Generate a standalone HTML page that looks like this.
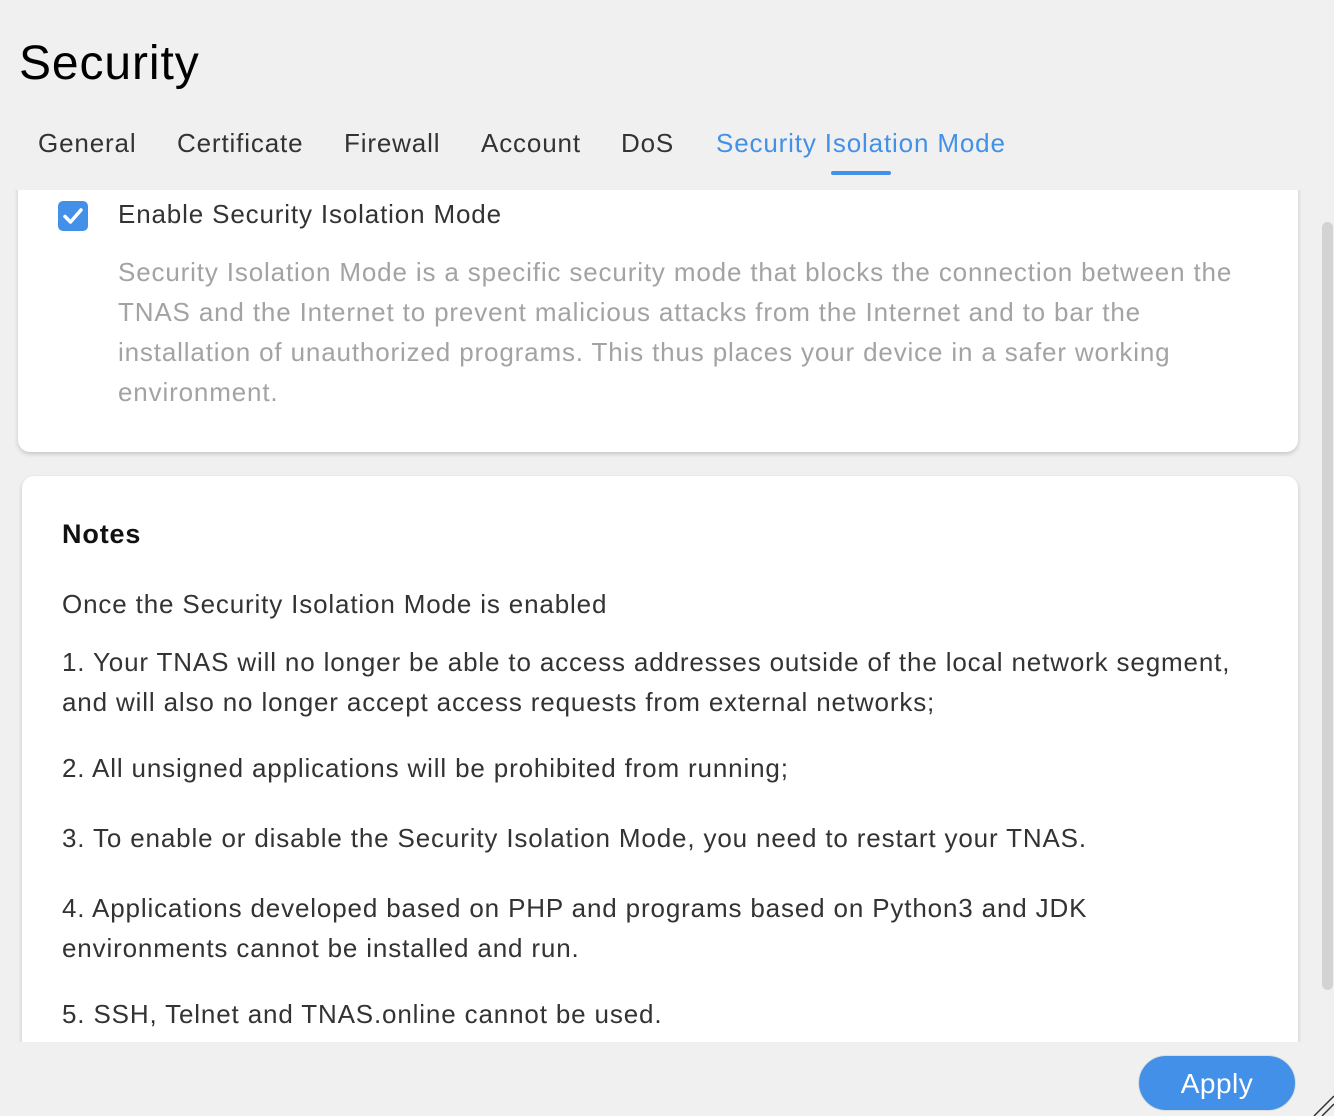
<!DOCTYPE html>
<html><head><meta charset="utf-8"><style>
*{margin:0;padding:0;box-sizing:border-box}
body{width:1334px;height:1116px;background:#f0f0f0;font-family:"Liberation Sans",Arial,sans-serif;position:relative;overflow:hidden;color:#333}
.title{position:absolute;left:19px;top:36px;font-size:48px;color:#000;letter-spacing:.9px}
.tabs{position:absolute;top:128px;left:0;font-size:26px;color:#333;letter-spacing:.85px}
.tabs span{position:absolute;white-space:nowrap}
.ul{position:absolute;left:831px;top:171px;width:60px;height:4px;background:#4290e8;border-radius:2px}
.clip{position:absolute;left:0;top:190px;width:1334px;height:852px;overflow:hidden}
.card{position:absolute;background:#fff;border-radius:12px;box-shadow:0 2px 5px rgba(0,0,0,.18)}
.cb{position:absolute;left:58px;top:11px;width:30px;height:30px;background:#4290e8;border-radius:5px}
.t{position:absolute;font-size:26px;line-height:40px;white-space:nowrap;letter-spacing:.85px}
.sb{position:absolute;left:1322px;top:222px;width:11px;height:768px;background:#d3d3d5;border-radius:6px}
.btn{position:absolute;left:1138px;top:1055px;width:158px;height:56px;border-radius:28px;background:#4290e8;color:#fff;font-size:28px;text-align:center;line-height:56px;border:1px solid #ddd;letter-spacing:.5px}
</style></head><body>
<div class="title">Security</div>
<div class="tabs">
<span style="left:38px">General</span>
<span style="left:177px">Certificate</span>
<span style="left:344px">Firewall</span>
<span style="left:481px">Account</span>
<span style="left:621px">DoS</span>
<span style="left:716px;color:#4290e8">Security Isolation Mode</span>
</div>
<div class="ul"></div>
<div class="clip">
<div class="card" style="left:18px;top:-20px;width:1280px;height:282px;border-radius:0 0 12px 12px"></div>
<div class="cb"><svg width="30" height="30" viewBox="0 0 30 30"><path d="M7 15.5l5.5 5.5L23 9" stroke="#fff" stroke-width="3.5" fill="none" stroke-linecap="round" stroke-linejoin="round"/></svg></div>
<div class="t" style="left:118px;top:4px">Enable Security Isolation Mode</div>
<div class="t" style="left:118px;top:62px;color:#a3a3a3">Security Isolation Mode is a specific security mode that blocks the connection between the<br>TNAS and the Internet to prevent malicious attacks from the Internet and to bar the<br>installation of unauthorized programs. This thus places your device in a safer working<br>environment.</div>
<div class="card" style="left:22px;top:286px;width:1276px;height:640px"></div>
<div class="t" style="left:62px;top:324px;font-weight:bold;color:#111;font-size:27px">Notes</div>
<div class="t" style="left:62px;top:394px">Once the Security Isolation Mode is enabled</div>
<div class="t" style="left:62px;top:452px">1. Your TNAS will no longer be able to access addresses outside of the local network segment,<br>and will also no longer accept access requests from external networks;</div>
<div class="t" style="left:62px;top:558px">2. All unsigned applications will be prohibited from running;</div>
<div class="t" style="left:62px;top:628px">3. To enable or disable the Security Isolation Mode, you need to restart your TNAS.</div>
<div class="t" style="left:62px;top:698px">4. Applications developed based on PHP and programs based on Python3 and JDK<br>environments cannot be installed and run.</div>
<div class="t" style="left:62px;top:804px">5. SSH, Telnet and TNAS.online cannot be used.</div>
</div>
<div class="sb"></div>
<div class="btn">Apply</div>
<svg style="position:absolute;left:1310px;top:1092px" width="24" height="24"><path d="M4 24L24 4M12 24L24 12" stroke="#333" stroke-width="1.5"/></svg>
</body></html>
